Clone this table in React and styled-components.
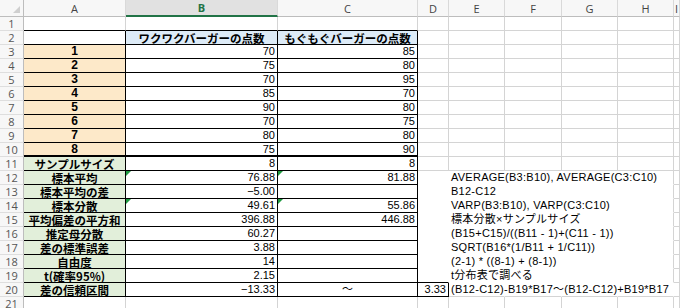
import React from 'react';
import styled, { createGlobalStyle, css } from 'styled-components';

const GlobalStyle = createGlobalStyle`
  html, body {
    margin: 0;
    padding: 0;
    background: #fff;
  }
  body {
    font-family: "Liberation Sans", "Noto Sans CJK JP", sans-serif;
  }
`;

const GRID = '#d4d4d4';
const LINE = '#000';
const NONE = 'transparent';

const Sheet = styled.div`
  display: grid;
  grid-template-columns: 24px 102px 152px 140px 31px 56px 57px 56px 56px 1fr;
  grid-template-rows: 17px;
  grid-auto-rows: 14px;
  width: 680px;
  height: 308px;
  overflow: hidden;
  background: #fff;
`;

const Corner = styled.div`
  box-sizing: border-box;
  display: flex;
  align-items: flex-end;
  justify-content: flex-end;
  padding: 0 3px 3px 0;
  background: #f7f7f7;
  border-right: 1px solid #bdbdbd;
  border-bottom: 1px solid #bdbdbd;
`;

const ColHead = styled.div`
  box-sizing: border-box;
  display: flex;
  align-items: center;
  justify-content: center;
  font-family: "Open Sans", "Noto Sans", sans-serif;
  font-size: 11px;
  color: ${p => (p.$active ? '#217346' : '#444')};
  font-weight: ${p => (p.$active ? 700 : 400)};
  background: ${p => (p.$active ? '#e1e1e1' : '#f7f7f7')};
  border-right: 1px solid #d9d9d9;
  border-bottom: ${p => (p.$active ? '2px solid #217346' : '1px solid #bdbdbd')};
`;

const RowHead = styled.div`
  box-sizing: border-box;
  display: flex;
  align-items: center;
  justify-content: center;
  font-family: "Open Sans", "Noto Sans", sans-serif;
  font-size: 11px;
  line-height: 13px;
  color: #555;
  background: #f7f7f7;
  border-right: 1px solid #bdbdbd;
  border-bottom: 1px solid #dedede;
  overflow: hidden;
`;

const Cell = styled.div`
  position: relative;
  box-sizing: border-box;
  display: flex;
  align-items: center;
  justify-content: ${p =>
    p.$align === 'right' ? 'flex-end' : p.$align === 'center' ? 'center' : 'flex-start'};
  padding: 0 2px;
  white-space: nowrap;
  font-size: 11px;
  line-height: 13px;
  color: #000;
  background: ${p => p.$bg || 'transparent'};
  border-right: 1px solid ${p => p.$right};
  border-bottom: ${p => (p.$thick ? 2 : 1)}px solid ${p => p.$bottom};

  ${p =>
    p.$kind === 'label' &&
    css`
      font-family: "Noto Sans CJK JP", sans-serif;
      font-weight: 700;
      font-size: 11.5px;
      line-height: 12px;
    `}

  ${p =>
    p.$kind === 'head' &&
    css`
      font-family: "Noto Sans CJK JP", sans-serif;
      font-weight: 700;
      font-size: 11.5px;
      line-height: 12px;
    `}

  ${p =>
    p.$kind === 'num' &&
    css`
      font-weight: 700;
      font-size: 12px;
    `}

  ${p =>
    p.$kind === 'note' &&
    css`
      letter-spacing: 0.25px;
    `}

  ${p =>
    p.$flag &&
    css`
      &::before {
        content: '';
        position: absolute;
        left: 0;
        top: 0;
        border-top: 5px solid #1e9a40;
        border-right: 5px solid transparent;
      }
    `}
`;

const COLS = ['A', 'B', 'C', 'D', 'E', 'F', 'G', 'H', 'I'];
const WAKU = [70, 75, 70, 85, 90, 70, 80, 75];
const MOGU = [85, 80, 95, 70, 80, 75, 80, 90];

const LABELS = {
  11: 'サンプルサイズ',
  12: '標本平均',
  13: '標本平均の差',
  14: '標本分散',
  15: '平均偏差の平方和',
  16: '推定母分散',
  17: '差の標準誤差',
  18: '自由度',
  19: 't(確率95%)',
  20: '差の信頼区間',
};

const B_VALUES = {
  11: '8', 12: '76.88', 13: '−5.00', 14: '49.61', 15: '396.88',
  16: '60.27', 17: '3.88', 18: '14', 19: '2.15', 20: '−13.33',
};

const C_VALUES = { 11: '8', 12: '81.88', 14: '55.86', 15: '446.88' };

const NOTES = {
  12: 'AVERAGE(B3:B10), AVERAGE(C3:C10)',
  13: 'B12-C12',
  14: 'VARP(B3:B10), VARP(C3:C10)',
  15: '標本分散×サンプルサイズ',
  16: '(B15+C15)/((B11 - 1)+(C11 - 1))',
  17: 'SQRT(B16*(1/B11 + 1/C11))',
  18: '(2-1) * ((8-1) + (8-1))',
  19: 't分布表で調べる',
  20: '(B12-C12)-B19*B17～(B12-C12)+B19*B17',
};

function borders(r, c) {
  const inTable = r >= 2 && r <= 20 && c <= 2;
  const notes = r >= 12 && r <= 20 && c >= 3 && c <= 7;
  let right = GRID;
  let bottom = GRID;
  if (inTable) {
    right = LINE;
    bottom = LINE;
  } else if (r === 1 && c <= 2) {
    bottom = LINE;
  } else if (c === 3 && r === 20) {
    right = LINE;
    bottom = LINE;
  } else if (notes) {
    right = c === 7 && r < 20 ? GRID : NONE;
    bottom = c === 3 && r === 19 ? LINE : r === 20 ? GRID : NONE;
  }
  return { right, bottom, thick: r === 10 && c <= 2 };
}

function cellContent(r, c) {
  if (r === 2 && c === 1) return { text: 'ワクワクバーガーの点数', kind: 'head', align: 'center', bg: '#ddebf7' };
  if (r === 2 && c === 2) return { text: 'もぐもぐバーガーの点数', kind: 'head', align: 'center', bg: '#ddebf7' };
  if (r >= 3 && r <= 10) {
    if (c === 0) return { text: String(r - 2), kind: 'num', align: 'center', bg: '#fde9c9' };
    if (c === 1) return { text: String(WAKU[r - 3]), align: 'right' };
    if (c === 2) return { text: String(MOGU[r - 3]), align: 'right' };
  }
  if (r >= 11 && r <= 20) {
    const flag = r === 12 || r === 14;
    if (c === 0) return { text: LABELS[r], kind: 'label', align: 'center', bg: '#e2efda' };
    if (c === 1) return { text: B_VALUES[r], align: 'right', flag };
    if (c === 2) {
      if (r === 20) return { text: '～', align: 'center' };
      return { text: C_VALUES[r] || '', align: 'right', flag };
    }
    if (c === 3 && r === 20) return { text: '3.33', align: 'right' };
    if (c === 4 && NOTES[r]) return { text: NOTES[r], kind: 'note', align: 'left' };
  }
  return { text: '' };
}

function CornerMark() {
  return (
    <svg width="7" height="7" viewBox="0 0 7 7">
      <polygon points="7,0 7,7 0,7" fill="#cfcfcf" />
    </svg>
  );
}

export default function App() {
  const rows = Array.from({ length: 21 }, (_, i) => i + 1);
  return (
    <>
      <GlobalStyle />
      <Sheet>
        <Corner>
          <CornerMark />
        </Corner>
        {COLS.map(col => (
          <ColHead key={col} $active={col === 'B'}>
            {col}
          </ColHead>
        ))}
        {rows.map(r => (
          <React.Fragment key={r}>
            <RowHead>{r}</RowHead>
            {COLS.map((col, c) => {
              const b = borders(r, c);
              const v = cellContent(r, c);
              return (
                <Cell
                  key={col + r}
                  $right={b.right}
                  $bottom={b.bottom}
                  $thick={b.thick}
                  $align={v.align}
                  $kind={v.kind}
                  $bg={v.bg}
                  $flag={v.flag}
                >
                  {v.text}
                </Cell>
              );
            })}
          </React.Fragment>
        ))}
      </Sheet>
    </>
  );
}
